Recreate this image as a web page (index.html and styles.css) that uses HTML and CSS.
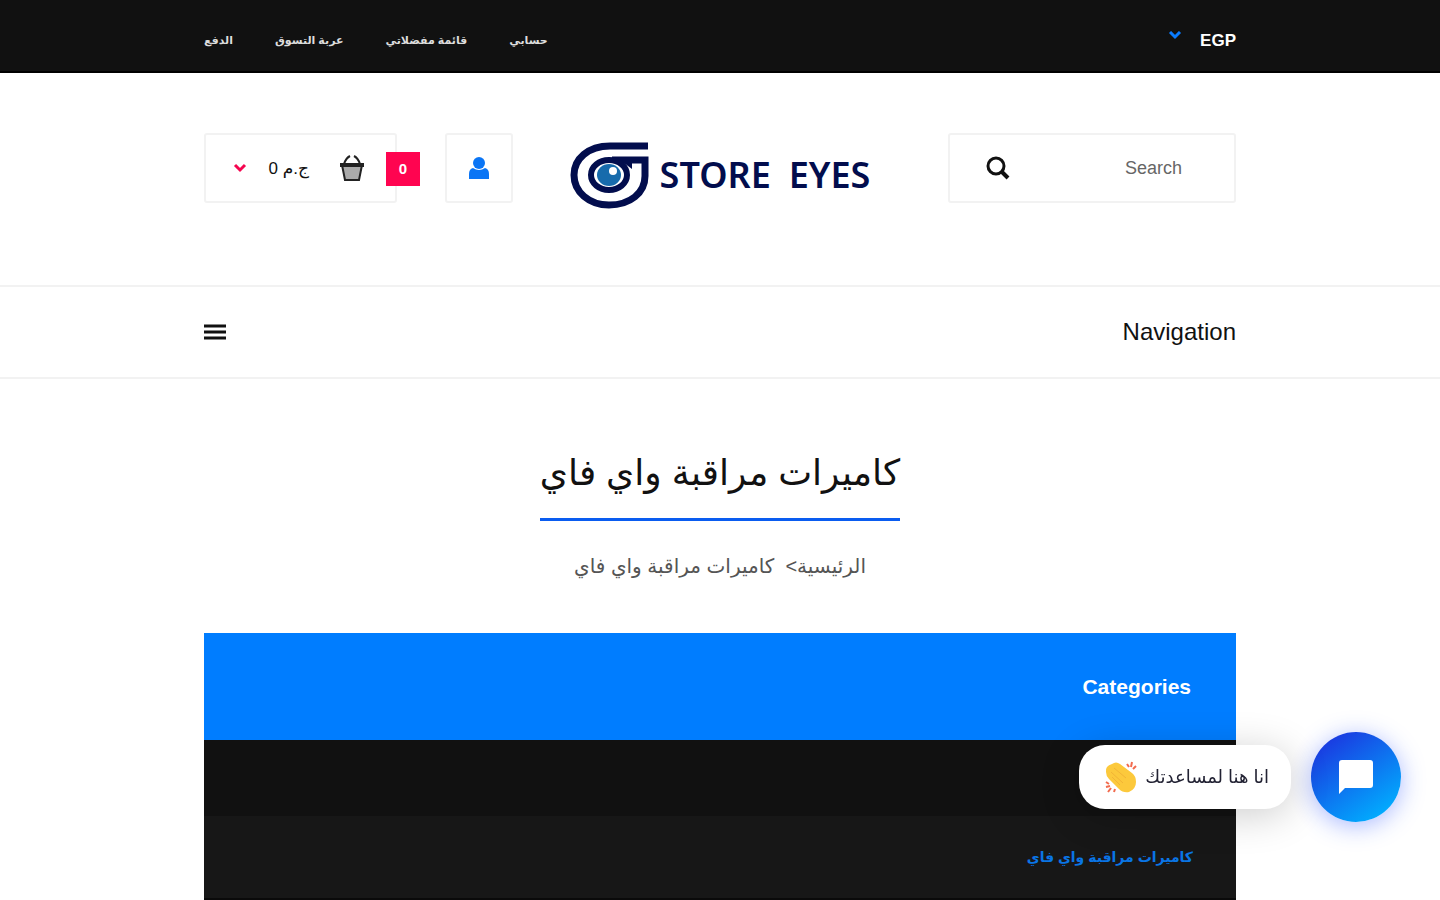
FILE: index.html
```html
<!DOCTYPE html>
<html lang="ar" dir="rtl">
<head>
    <meta charset="UTF-8">
    <meta name="viewport" content="width=device-width, initial-scale=1.0">
    <title>كاميرات مراقبة واي فاي - Store Eyes</title>
    <link rel="stylesheet" href="styles.css">
</head>
<body>
    <div class="topbar">
        <div class="container topbar-inner">
            <button class="currency" type="button">
                <span>EGP</span>
                <svg class="currency-arrow" viewBox="0 0 14 10" aria-hidden="true"><path d="M2 1l5 5 5-5" fill="none" stroke="#0a7cff" stroke-width="3"/></svg>
            </button>
            <nav class="top-links">
                <a href="#">حسابي</a>
                <a href="#">قائمة مفضلاتي</a>
                <a href="#">عربة التسوق</a>
                <a href="#">الدفع</a>
            </nav>
        </div>
    </div>

    <header class="header">
        <div class="container header-inner">
            <form class="search">
                <input class="search-input" type="text" placeholder="Search" aria-label="Search">
                <button class="search-btn" type="submit" aria-label="Search">
                    <svg viewBox="0 0 24 24"><circle cx="10" cy="10" r="8" fill="none" stroke="#111" stroke-width="3"/><path d="M15 15L22 22" stroke="#111" stroke-width="4"/></svg>
                </button>
            </form>

            <a class="logo" href="#" dir="ltr">
                <svg class="logo-mark" viewBox="0 0 80 68" aria-hidden="true">
                    <path d="M78 5H40C18 5 4 18 4 34c0 17 15 30 35 30 21 0 36-12 36-29V19H42" fill="none" stroke="#020d4d" stroke-width="7"/>
                    <path d="M50 19h12v9z" fill="#020d4d"/>
                    <ellipse cx="39" cy="34" rx="18" ry="15" fill="#fff" stroke="#020d4d" stroke-width="6"/>
                    <ellipse cx="39" cy="34" rx="12" ry="11" fill="#176bac"/>
                    <circle cx="43" cy="30" r="4" fill="#fff"/>
                </svg>
                <span>STORE</span>
                <span>EYES</span>
            </a>

            <div class="header-tools">
                <a class="account" href="#" aria-label="حسابي">
                    <svg viewBox="0 0 20 22"><circle cx="10" cy="6" r="6" fill="#0a75f5"/><path d="M0 22v-5q0-5 4-6 6 4 12 0 4 1 4 6v5z" fill="#0a75f5"/></svg>
                </a>
                <button class="cart" type="button">
                    <span class="cart-count">0</span>
                    <svg class="cart-icon" viewBox="0 0 26 26" aria-hidden="true">
                        <path d="M5 9q2-6 6-8M21 9q-2-6-6-8" fill="none" stroke="#222" stroke-width="2"/>
                        <path d="M3 10h20l-3 15H6z" fill="#aaa" stroke="#222" stroke-width="2"/>
                        <path d="M1 8h24v4H1z" fill="#222"/>
                    </svg>
                    <span class="cart-total">ج.م 0</span>
                    <svg class="cart-arrow" viewBox="0 0 14 10" aria-hidden="true"><path d="M2 2l5 5 5-5" fill="none" stroke="#f5054f" stroke-width="3"/></svg>
                </button>
            </div>
        </div>
    </header>

    <div class="navbar">
        <div class="container navbar-inner">
            <span>Navigation</span>
            <button class="menu-btn" type="button" aria-label="Navigation">
                <svg viewBox="0 0 22 16"><path d="M0 2h22M0 8h22M0 14h22" stroke="#111" stroke-width="3"/></svg>
            </button>
        </div>
    </div>

    <main class="container">
        <div class="page-head">
            <h1>كاميرات مراقبة واي فاي</h1>
            <nav class="breadcrumb">
                <a href="#">الرئيسية</a>&gt;&nbsp; <span>كاميرات مراقبة واي فاي</span>
            </nav>
        </div>

        <section class="categories">
            <h2>Categories</h2>
            <ul>
                <li class="blank"></li>
                <li><a href="#">كاميرات مراقبة واي فاي</a></li>
            </ul>
        </section>
    </main>

    <div class="chat">
        <button class="chat-btn" type="button" aria-label="Chat">
            <svg viewBox="0 0 34 34"><path d="M3 0h28q3 0 3 3v22q0 3-3 3H6l-6 6V3q0-3 3-3z" fill="#fff"/></svg>
        </button>
        <div class="chat-bubble">
            <span>انا هنا لمساعدتك</span>
            <svg class="clap" viewBox="0 0 32 32" aria-hidden="true">
                <path d="M1 11Q0 5 7 3q4-3 8 0l12 9q4 3 4 9 0 7-7 10-6 1-10-3L4 18q-3-3-3-7z" fill="#fcc93c"/>
                <path d="M9 7l12 10M6 11l12 11M7 16l8 8" fill="none" stroke="#f2b436" stroke-width="1"/>
                <path d="M22 3l2 3M27 1l-1 5M31 5l-3 3M1 21l3 2M1 26l4-1M3 31l3-4M9 31l1-3" fill="none" stroke="#f26b4e" stroke-width="2"/>
            </svg>
        </div>
    </div>
</body>
</html>
```
FILE: styles.css
```css
* {
    box-sizing: border-box;
}

body {
    margin: 0;
    background-color: #fff;
    color: #111;
    font-family: "Liberation Sans", "DejaVu Sans", sans-serif;
    font-size: 18px;
}

a {
    color: inherit;
    text-decoration: none;
}

button {
    padding: 0;
    border: none;
    background: none;
    color: inherit;
    font: inherit;
    cursor: pointer;
}

svg {
    display: block;
}

.container {
    max-width: 1120px;
    margin: 0 auto;
    padding: 0 44px;
}

/* top bar */
.topbar {
    background-color: #111;
    border-bottom: 2px solid #000;
    color: #fff;
}

.topbar-inner {
    display: flex;
    align-items: center;
    justify-content: space-between;
    min-height: 71px;
    padding-top: 10px;
}

.currency {
    display: flex;
    align-items: flex-start;
    gap: 18px;
    font-size: 17px;
    font-weight: bold;
}

.currency-arrow {
    width: 14px;
}

.top-links {
    display: flex;
    gap: 42px;
    font-size: 11px;
    font-weight: bold;
    color: #ddd;
}

/* header */
.header-inner {
    display: grid;
    grid-template-columns: 1fr auto 1fr;
    align-items: start;
    padding-top: 60px;
    padding-bottom: 76px;
}

.search,
.account,
.cart {
    display: flex;
    align-items: center;
    height: 70px;
    border: 2px solid #f2f2f2;
    border-radius: 3px;
}

.search {
    width: 288px;
    padding: 0 52px 0 36px;
}

.search-input {
    flex: 1;
    min-width: 0;
    padding: 0;
    border: none;
    outline: none;
    font: inherit;
}

.search-input::placeholder {
    color: #666;
    opacity: 1;
}

.search-btn svg {
    width: 24px;
}

.logo {
    display: flex;
    align-items: center;
    gap: 18px;
    padding-top: 8px;
    color: #020d4d;
    font-family: "Noto Sans", sans-serif;
    font-size: 36px;
    font-weight: 600;
    line-height: 50px;
}

.logo-mark {
    width: 80px;
    margin-right: -8px;
}

.header-tools {
    display: flex;
    justify-content: flex-end;
    gap: 48px;
}

.account {
    justify-content: center;
    width: 68px;
}

.account svg {
    width: 20px;
}

.cart {
    position: relative;
    gap: 30px;
    width: 193px;
    padding-right: 30px;
}

.cart-count {
    position: absolute;
    top: 17px;
    right: -25px;
    width: 34px;
    background-color: #ff0450;
    color: #fff;
    font-size: 15px;
    font-weight: bold;
    line-height: 34px;
}

.cart-icon {
    width: 26px;
}

.cart-total {
    font-size: 17px;
}

.cart-arrow {
    width: 14px;
    margin-right: -8px;
}

/* navigation */
.navbar {
    border-top: 2px solid #f2f2f2;
    border-bottom: 2px solid #f2f2f2;
}

.navbar-inner {
    display: flex;
    align-items: center;
    justify-content: space-between;
    min-height: 90px;
    font-size: 24px;
}

.menu-btn svg {
    width: 22px;
}

/* page title */
.page-head {
    display: flex;
    flex-direction: column;
    align-items: center;
    gap: 28px;
    padding: 65px 0 50px;
}

h1 {
    margin: 0;
    padding-bottom: 16px;
    border-bottom: 3px solid #0a5cf0;
    font-size: 36px;
    font-weight: normal;
    line-height: 58px;
}

.breadcrumb {
    color: #555;
    font-size: 20px;
    line-height: 34px;
}

/* categories */
.categories {
    background-color: #111;
    color: #fff;
}

.categories h2 {
    margin: 0;
    padding: 0 45px;
    background-color: #007dff;
    font-size: 21px;
    line-height: 107px;
}

.categories ul {
    margin: 0;
    padding: 0;
    list-style: none;
}

.categories li {
    padding: 0 43px;
    background-color: #171717;
    border-bottom: 2px solid #0a0a0a;
    color: #0a75e5;
    font-size: 14px;
    font-weight: bold;
    line-height: 82px;
}

.categories .blank {
    height: 76px;
    background-color: #111;
    border: none;
}

/* chat widget */
.chat {
    position: fixed;
    right: 39px;
    bottom: 78px;
    display: flex;
    align-items: center;
    gap: 20px;
}

.chat-btn {
    display: flex;
    align-items: center;
    justify-content: center;
    width: 90px;
    height: 90px;
    border-radius: 50%;
    background: linear-gradient(145deg, #1b37e0 10%, #00b0ff 90%);
    box-shadow: 0 4px 24px rgba(40, 80, 255, 0.4);
}

.chat-btn svg {
    width: 34px;
}

.chat-bubble {
    display: flex;
    align-items: center;
    gap: 8px;
    height: 64px;
    padding: 0 22px 0 26px;
    border-radius: 26px;
    background-color: #fff;
    box-shadow: 0 6px 40px rgba(0, 0, 0, 0.2);
    color: #223;
}

.clap {
    width: 32px;
}
```
